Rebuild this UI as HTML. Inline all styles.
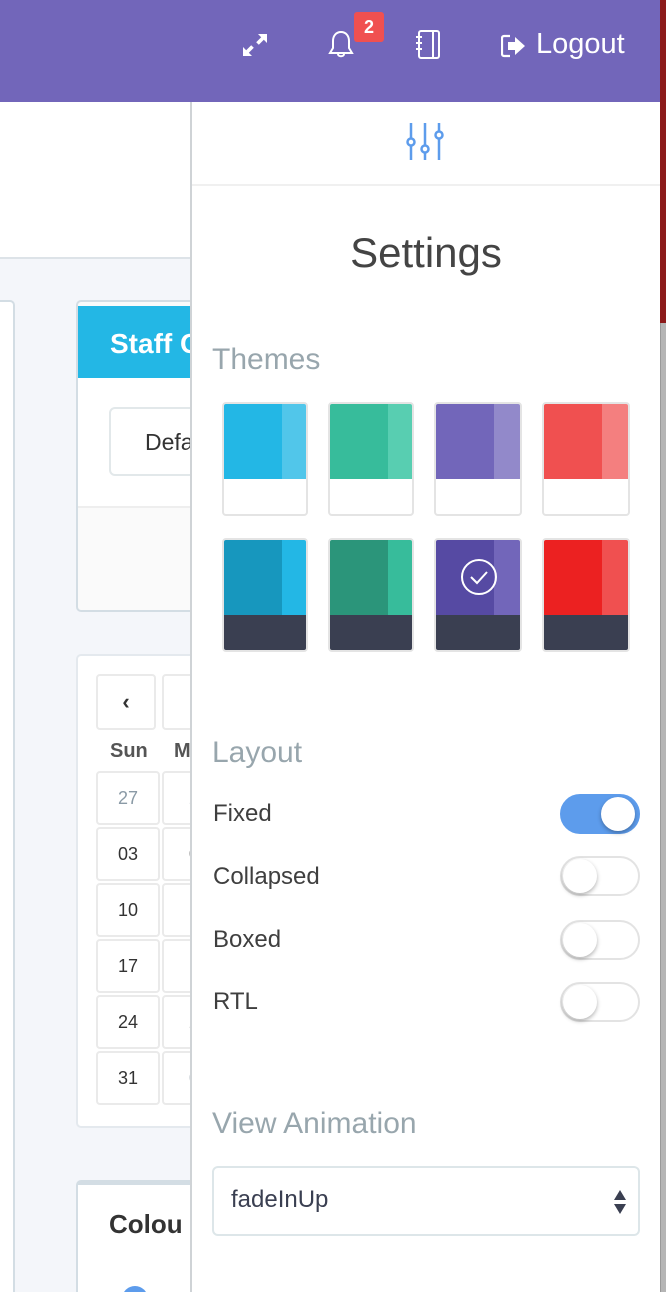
<!DOCTYPE html>
<html style="overflow:hidden;width:666px;height:1292px"><head><meta charset="utf-8"><style>
*{box-sizing:border-box;margin:0;padding:0}
body{width:666px;height:1292px;overflow:hidden;position:relative;background:#f4f6fa;font-family:"Liberation Sans",sans-serif}
.abs{position:absolute}
.top{left:0;top:0;width:666px;height:102px;background:#7266ba}
.wtop{left:0;top:102px;width:200px;height:157px;background:#fff;border-bottom:2px solid #dde3e8}
.panel{left:190px;top:102px;width:470px;height:1190px;background:#fff;border-left:2px solid #cfd3d6}
.sw{position:absolute;width:86px;height:114px;border:2px solid #e4e4e4;border-radius:4px;overflow:hidden;background:#fff}
.sw .a{position:absolute;left:0;top:0;width:58px;height:75px}
.sw .b{position:absolute;left:58px;top:0;width:26px;height:75px}
.sw .c{position:absolute;left:0;top:75px;width:84px;height:39px}
.lbl{position:absolute;left:213px;font-size:24px;color:#3f3f3f}
.tg{position:absolute;left:560px;width:80px;height:40px;border-radius:20px;border:2px solid #e3e3e3;background:#fff}
.tg i{position:absolute;top:1px;left:1px;width:34px;height:34px;border-radius:50%;background:#fff;box-shadow:0 2px 4px rgba(0,0,0,.3)}
.cell{position:absolute;width:64px;height:54px;border:2px solid #eaeaea;border-radius:4px;background:#fff;font-size:18px;color:#333;text-align:center;line-height:50px}
</style></head><body>
<div class="abs top"></div>
<div class="abs wtop"></div>
<div class="abs" style="left:-10px;top:300px;width:25px;height:992px;background:#fff;border:2px solid #d3dde4;border-bottom:none;border-radius:5px 5px 0 0"></div>
<div class="abs" style="left:76px;top:300px;width:130px;height:312px;background:#fafafa;border:2px solid #d3dde4;border-radius:5px;overflow:hidden">
 <div class="abs" style="left:0;top:4px;width:130px;height:72px;background:#23b7e5;color:#fff;font-weight:bold;font-size:28px;padding:22px 0 0 32px">Staff C</div>
 <div class="abs" style="left:0;top:76px;width:130px;height:130px;background:#fff;border-bottom:2px solid #eee"></div>
 <div class="abs" style="left:31px;top:105px;width:120px;height:69px;border:2px solid #e2e8ea;border-radius:6px;background:#fff;font-size:23px;color:#333;padding:20px 0 0 34px">Defa</div>
</div>
<div class="abs" style="left:76px;top:654px;width:130px;height:474px;background:#fff;border:2px solid #e4e9ee;border-radius:5px"></div>
<div class="cell" style="left:96px;top:674px;width:60px;height:56px;font-size:22px;font-weight:bold;line-height:52px">&#8249;</div>
<div class="cell" style="left:162px;top:674px;width:60px;height:56px"></div>
<div class="abs" style="left:110px;top:740px;font-size:20px;font-weight:bold;color:#555">Sun</div>
<div class="abs" style="left:174px;top:740px;font-size:20px;font-weight:bold;color:#555">M</div>
<div class="cell" style="left:96px;top:771px;color:#8a9aa6">27</div><div class="cell" style="left:162px;top:771px;color:#8a9aa6">2</div>
<div class="cell" style="left:96px;top:827px">03</div><div class="cell" style="left:162px;top:827px">0</div>
<div class="cell" style="left:96px;top:883px">10</div><div class="cell" style="left:162px;top:883px">1</div>
<div class="cell" style="left:96px;top:939px">17</div><div class="cell" style="left:162px;top:939px">1</div>
<div class="cell" style="left:96px;top:995px">24</div><div class="cell" style="left:162px;top:995px">2</div>
<div class="cell" style="left:96px;top:1051px">31</div><div class="cell" style="left:162px;top:1051px;color:#8a9aa6">0</div>
<div class="abs" style="left:76px;top:1180px;width:130px;height:112px;background:#fff;border:2px solid #d3dde4;border-top-width:5px;border-bottom:none;border-radius:5px 5px 0 0;font-size:26px;font-weight:bold;color:#333;padding:24px 0 0 31px">Colou</div>
<div class="abs" style="left:122px;top:1286px;width:26px;height:26px;border-radius:50%;background:#5d9cec"></div>

<svg class="abs" style="left:240px;top:30px" width="30" height="30" viewBox="0 0 30 30" fill="#fff"><path d="M18 4h9v9l-3.2-3.2-5 5-2.6-2.6 5-5zM12 26H3v-9l3.2 3.2 5-5 2.6 2.6-5 5z"/></svg>
<svg class="abs" style="left:326px;top:29px" width="30" height="32" viewBox="0 0 30 32" fill="none" stroke="#fff" stroke-width="2"><path d="M15 3c-5 0-8 4-8 9v7l-3 5h22l-3-5v-7c0-5-3-9-8-9zM12 25c0 3 6 3 6 0"/></svg>
<div class="abs" style="left:354px;top:12px;width:30px;height:30px;background:#f05050;border-radius:3px;color:#fff;font-weight:bold;font-size:18px;text-align:center;line-height:30px">2</div>
<svg class="abs" style="left:414px;top:29px" width="30" height="32" viewBox="0 0 30 32" fill="none" stroke="#fff" stroke-width="2"><rect x="5" y="2" width="20" height="27" rx="2"/><path d="M19 2v27M2 8h6M2 14h6M2 20h6"/></svg>
<svg class="abs" style="left:501px;top:34px" width="26" height="24" viewBox="0 0 26 24"><path d="M9 2H3a2 2 0 0 0-2 2v16a2 2 0 0 0 2 2h6" fill="none" stroke="#fff" stroke-width="2.2"/><path d="M7 8h7V3l10 9-10 9v-5H7z" fill="#fff"/></svg>
<div class="abs" style="left:536px;top:28px;font-size:29px;color:#fff">Logout</div>

<div class="abs panel"></div>
<div class="abs" style="left:192px;top:184px;width:468px;height:2px;background:#f0f0f0"></div>
<svg class="abs" style="left:405px;top:122px" width="40" height="40" viewBox="0 0 40 40" fill="#fff" stroke="#5d9cec" stroke-width="2.5"><path d="M6 1v37M20 1v37M34 1v37"/><circle cx="6" cy="20" r="3.5"/><circle cx="20" cy="27" r="3.5"/><circle cx="34" cy="13" r="3.5"/></svg>
<div class="abs" style="left:192px;top:229px;width:468px;text-align:center;font-size:42px;color:#444">Settings</div>
<div class="abs" style="left:212px;top:343px;font-size:30px;color:#98a6ad">Themes</div>

<div class="sw" style="left:222px;top:402px"><div class="a" style="background:#23b7e5"></div><div class="b" style="background:#51c6ea"></div></div>
<div class="sw" style="left:328px;top:402px"><div class="a" style="background:#37bc9b"></div><div class="b" style="background:#58ceb1"></div></div>
<div class="sw" style="left:434px;top:402px;width:88px"><div class="a" style="background:#7266ba"></div><div class="b" style="background:#9289ca;width:28px"></div></div>
<div class="sw" style="left:542px;top:402px;width:88px"><div class="a" style="background:#f05050"></div><div class="b" style="background:#f47f7f;width:28px"></div></div>
<div class="sw" style="left:222px;top:538px"><div class="a" style="background:#1797be"></div><div class="b" style="background:#23b7e5"></div><div class="c" style="background:#3a3f51"></div></div>
<div class="sw" style="left:328px;top:538px"><div class="a" style="background:#2b957a"></div><div class="b" style="background:#37bc9b"></div><div class="c" style="background:#3a3f51"></div></div>
<div class="sw" style="left:434px;top:538px;width:88px"><div class="a" style="background:#564aa3"></div><div class="b" style="background:#7266ba;width:28px"></div><div class="c" style="background:#3a3f51;width:86px"></div>
<svg style="position:absolute;left:24px;top:18px" width="38" height="38" viewBox="0 0 38 38" fill="none" stroke="#fff" stroke-width="2"><circle cx="19" cy="19" r="17"/><path d="M11 19l6 6 10-11"/></svg></div>
<div class="sw" style="left:542px;top:538px;width:88px"><div class="a" style="background:#ec2121"></div><div class="b" style="background:#f05050;width:28px"></div><div class="c" style="background:#3a3f51;width:86px"></div></div>

<div class="abs" style="left:212px;top:736px;font-size:30px;color:#98a6ad">Layout</div>
<div class="lbl" style="top:800px">Fixed</div>
<div class="lbl" style="top:863px">Collapsed</div>
<div class="lbl" style="top:926px">Boxed</div>
<div class="lbl" style="top:988px">RTL</div>
<div class="tg" style="top:794px;background:#5d9cec;border-color:#5d9cec"><i style="left:39px"></i></div>
<div class="tg" style="top:856px"><i></i></div>
<div class="tg" style="top:920px"><i></i></div>
<div class="tg" style="top:982px"><i></i></div>

<div class="abs" style="left:212px;top:1107px;font-size:30px;color:#98a6ad">View Animation</div>
<div class="abs" style="left:212px;top:1166px;width:428px;height:70px;border:2px solid #dde6e9;border-radius:6px;font-size:24px;color:#3a3f51;padding:18px 0 0 17px">fadeInUp</div>
<svg class="abs" style="left:612px;top:1189px" width="16" height="26" viewBox="0 0 16 26" fill="#3a3f51"><path d="M8 1l6 10H2zM8 25l6-10H2z"/></svg>

<div class="abs" style="left:660px;top:0;width:6px;height:323px;background:#8c1a1a"></div>
<div class="abs" style="left:660px;top:323px;width:6px;height:969px;background:#b5b5b5;border-left:1px solid #999"></div>
</body></html>
